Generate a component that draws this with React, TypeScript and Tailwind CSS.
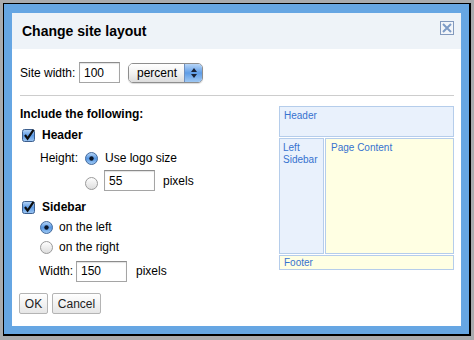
import React from "react";

function Checkbox() {
  return (
    <svg width="13" height="13" viewBox="0 0 13 13" className="shrink-0">
      <defs>
        <linearGradient id="cbg" x1="0" y1="0" x2="0" y2="1">
          <stop offset="0" stopColor="#b8d6f7" />
          <stop offset="0.5" stopColor="#5d9ae4" />
          <stop offset="1" stopColor="#9cc6f2" />
        </linearGradient>
      </defs>
      <rect x="0.5" y="0.5" width="12" height="12" rx="2" fill="url(#cbg)" stroke="#3d5f8e" />
      <path d="M3 6 L5.6 9.6 L11.5 0.8" stroke="#0d0d0d" strokeWidth="2.2" fill="none" />
    </svg>
  );
}

function Radio({ checked }: { checked?: boolean }) {
  return (
    <svg width="13" height="13" viewBox="0 0 13 13" className="shrink-0">
      <defs>
        <linearGradient id="rbon" x1="0" y1="0" x2="0" y2="1">
          <stop offset="0" stopColor="#bcd9f8" />
          <stop offset="0.5" stopColor="#5797e3" />
          <stop offset="1" stopColor="#a2cbf4" />
        </linearGradient>
        <linearGradient id="rboff" x1="0" y1="0" x2="0" y2="1">
          <stop offset="0" stopColor="#ffffff" />
          <stop offset="1" stopColor="#dcdcdc" />
        </linearGradient>
      </defs>
      {checked ? (
        <>
          <circle cx="6.5" cy="6.5" r="6" fill="url(#rbon)" stroke="#456b9c" />
          <circle cx="6.5" cy="6.5" r="2.2" fill="#0b1628" />
        </>
      ) : (
        <circle cx="6.5" cy="6.5" r="6" fill="url(#rboff)" stroke="#9a9a9a" />
      )}
    </svg>
  );
}

function TextInput({ value, width }: { value: string; width: string }) {
  return (
    <div
      className={`flex h-[21px] ${width} items-center border border-[#a5a5a5] border-t-[#8c8c8c] bg-white pl-[4px] text-[12px] text-black shadow-[inset_0_1px_1px_rgba(0,0,0,0.12)]`}
    >
      {value}
    </div>
  );
}

function Button({ label, width }: { label: string; width: string }) {
  return (
    <div
      className={`flex h-[21px] ${width} items-center justify-center rounded-[2px] border border-[#b4b4b4] bg-gradient-to-b from-white to-[#e6e6e6] text-[12px] text-[#222]`}
    >
      {label}
    </div>
  );
}

function Preview() {
  return (
    <div className="flex w-[175px] flex-col text-[10px] leading-[12px] text-[#3672cf]">
      <div className="h-[31px] border border-[#b5cdeb] bg-[#e9f1fc] pl-[4px] pt-[3px]">Header</div>
      <div className="mt-[1px] flex h-[116px] gap-[1px]">
        <div className="w-[45px] border border-[#b5cdeb] bg-[#e9f1fc] pl-[3px] pt-[3px]">
          Left
          <br />
          Sidebar
        </div>
        <div className="flex-1 border border-[#b5cdeb] bg-[#ffffe3] pl-[5px] pt-[3px]">Page Content</div>
      </div>
      <div className="mt-[1px] flex h-[15px] items-center border border-[#b5cdeb] bg-[#ffffe3] pl-[4px]">
        Footer
      </div>
    </div>
  );
}

export default function App() {
  return (
    <div className="h-[340px] w-[474px] overflow-hidden bg-[#a9abae] pl-[3px] pt-[3px] font-['Liberation_Sans',Arial,sans-serif] text-black">
      <div className="h-[333px] w-[468px] border border-black border-r-2 border-b-2">
        <div className="flex h-full flex-col border-8 border-t-[9px] border-[#66a6e3] bg-white">
          <div className="flex h-[36px] shrink-0 items-start justify-between bg-[#eef3f8] pl-[10px] pr-[7px]">
            <div className="mt-[9px] text-[14px] font-bold leading-[18px]">Change site layout</div>
            <div className="mt-[8px] flex h-[14px] w-[14px] items-center justify-center border border-[#8299bd] bg-[#f2f5f9]">
              <svg width="10" height="10" viewBox="0 0 10 10">
                <path d="M1 1 L9 9 M9 1 L1 9" stroke="#7d9bc6" strokeWidth="2" />
              </svg>
            </div>
          </div>

          <div className="flex flex-1 flex-col pl-[8px] pr-[7px]">
            <div className="mt-[13px] flex h-[21px] items-center text-[12px]">
              <span className="w-[59px]">Site width:</span>
              <TextInput value="100" width="w-[41px]" />
              <div className="ml-[8px] flex h-[20px] w-[75px] overflow-hidden rounded-[5px] border border-[#8e8e8e] shadow-[0_1px_1px_rgba(0,0,0,0.15)]">
                <div className="flex flex-1 items-center bg-gradient-to-b from-white via-[#f2f2f2] to-[#dcdcdc] pl-[8px] text-[12px]">
                  percent
                </div>
                <div className="flex w-[18px] flex-col items-center justify-center gap-[2px] border-l border-[#6e8fbf] bg-gradient-to-b from-[#b7d5f7] via-[#5e9ce6] to-[#9fc8f3]">
                  <svg width="6" height="4" viewBox="0 0 6 4">
                    <path d="M3 0 L6 4 L0 4 Z" fill="#1a2236" />
                  </svg>
                  <svg width="6" height="4" viewBox="0 0 6 4">
                    <path d="M0 0 L6 0 L3 4 Z" fill="#1a2236" />
                  </svg>
                </div>
              </div>
            </div>

            <div className="mt-[12px] h-px bg-[#cdcdcd]" />

            <div className="mt-[10px] flex">
              <div className="flex flex-1 flex-col pt-[1px] text-[12px]">
                <div className="flex h-[14px] items-center font-bold">Include the following:</div>

                <div className="mt-[4px] flex h-[20px] items-center pl-[2px]">
                  <Checkbox />
                  <span className="ml-[7px] font-bold">Header</span>
                </div>

                <div className="mt-[2px] flex h-[22px] items-center pl-[20px]">
                  <span className="w-[45px]">Height:</span>
                  <Radio checked />
                  <span className="ml-[7px]">Use logo size</span>
                </div>

                <div className="mt-[1px] flex h-[21px] items-center pl-[65px]">
                  <div className="mt-[5px]">
                    <Radio />
                  </div>
                  <div className="ml-[6px]">
                    <TextInput value="55" width="w-[51px]" />
                  </div>
                  <span className="ml-[8px]">pixels</span>
                </div>

                <div className="mt-[6px] flex h-[20px] items-center pl-[2px]">
                  <Checkbox />
                  <span className="ml-[7px] font-bold">Sidebar</span>
                </div>

                <div className="flex h-[20px] items-center pl-[20px]">
                  <Radio checked />
                  <span className="ml-[6px]">on the left</span>
                </div>

                <div className="flex h-[20px] items-center pl-[20px]">
                  <Radio />
                  <span className="ml-[6px]">on the right</span>
                </div>

                <div className="mt-[3px] flex h-[22px] items-center pl-[19px]">
                  <span className="w-[37px]">Width:</span>
                  <TextInput value="150" width="w-[51px]" />
                  <span className="ml-[9px]">pixels</span>
                </div>

                <div className="mt-[11px] flex h-[21px] items-center gap-[4px] pl-[-1px]">
                  <div className="-ml-[1px]">
                    <Button label="OK" width="w-[29px]" />
                  </div>
                  <Button label="Cancel" width="w-[49px]" />
                </div>
              </div>
              <Preview />
            </div>
          </div>
        </div>
      </div>
    </div>
  );
}
